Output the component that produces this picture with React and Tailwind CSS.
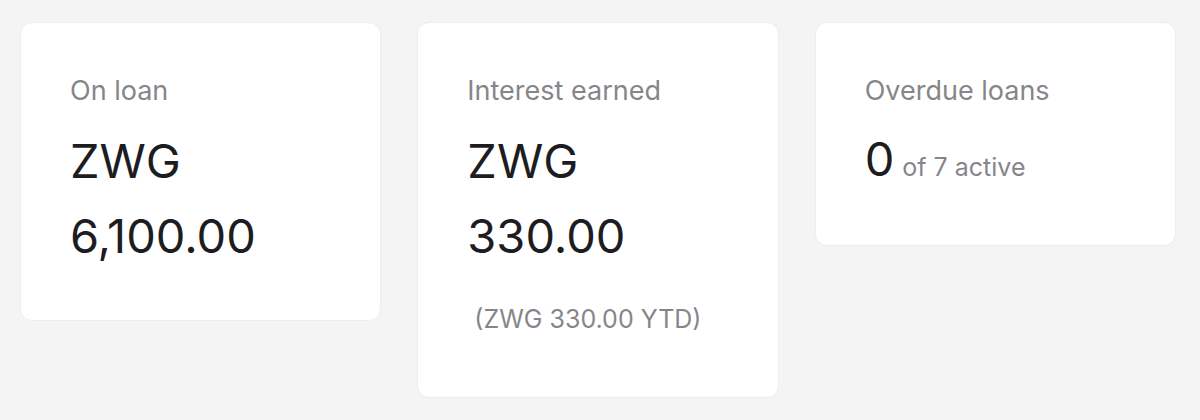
export default function App() {
  return (
    <div
      className="min-h-[420px] bg-[#f4f4f4] pl-[20px] pr-[24px] pt-[22px]"
      style={{ fontFamily: 'Inter, "Liberation Sans", Arial, sans-serif' }}
    >
      <div className="grid grid-cols-3 items-start gap-[36px]">
        {/* On loan */}
        <div className="rounded-[12px] border border-[#ededed] bg-white px-[49px] pt-[50px] pb-[47px]">
          <p className="text-[27px] leading-[36px] text-[#86868a]">On loan</p>
          <div className="mt-[14px] text-[47px] leading-[75px] text-[#1d1d1f]">
            <span className="block">ZWG</span>
            <span className="block">6,100.00</span>
          </div>
        </div>

        {/* Interest earned */}
        <div className="rounded-[12px] border border-[#ededed] bg-white px-[49px] pt-[50px] pb-[60px]">
          <p className="text-[27px] leading-[36px] text-[#86868a]">Interest earned</p>
          <div className="mt-[14px] text-[47px] leading-[75px] text-[#1d1d1f]">
            <span className="block">ZWG</span>
            <span className="block">330.00</span>
          </div>
          <p className="whitespace-pre pt-[28px] text-[25px] leading-[36px] text-[#86868a]">
            {" (ZWG 330.00 YTD)"}
          </p>
        </div>

        {/* Overdue loans */}
        <div className="rounded-[12px] border border-[#ededed] bg-white px-[49px] pt-[50px] pb-[47px]">
          <p className="text-[27px] leading-[36px] text-[#86868a]">Overdue loans</p>
          <div className="mt-[14px] flex h-[75px] items-baseline pt-[8px] text-[#1d1d1f]">
            <span className="text-[47px] leading-[56px]">0</span>
            <span className="ml-[8px] text-[25px] leading-[30px] text-[#86868a]">of 7 active</span>
          </div>
        </div>
      </div>
    </div>
  );
}
